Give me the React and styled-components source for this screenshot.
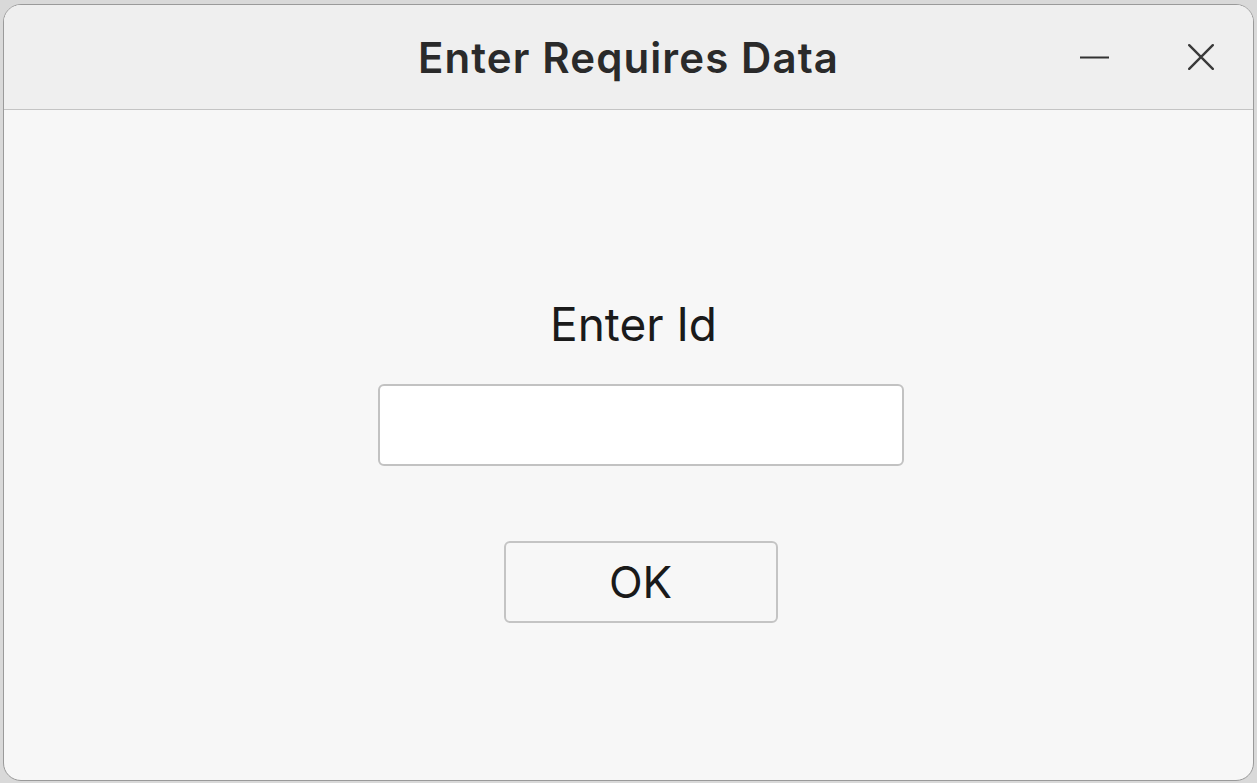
import React from "react";
import styled, { createGlobalStyle } from "styled-components";

const Global = createGlobalStyle`
  html, body {
    margin: 0;
    padding: 0;
    background: #d9d9d9;
    font-family: Inter, "Noto Sans", sans-serif;
  }
`;

const Screen = styled.div`
  width: 1257px;
  height: 783px;
  box-sizing: border-box;
  padding: 4px 3px 2px 3px;
  display: flex;
`;

const Window = styled.div`
  flex: 1;
  display: flex;
  flex-direction: column;
  border: 1.5px solid #9a9a9a;
  border-radius: 18px;
  background: #f7f7f7;
  overflow: hidden;
`;

const TitleBar = styled.div`
  height: 104px;
  flex-shrink: 0;
  display: grid;
  grid-template-columns: 1fr auto 1fr;
  align-items: center;
  background: #efefef;
  border-bottom: 1.5px solid #c4c4c4;
`;

const Title = styled.h1`
  grid-column: 2;
  margin: 0;
  font-size: 42px;
  font-weight: 600;
  color: #2a2a2a;
  letter-spacing: 1.1px;
`;

const Controls = styled.div`
  grid-column: 3;
  justify-self: end;
  display: flex;
  align-items: center;
  gap: 79px;
  padding-right: 39px;
`;

const CtrlButton = styled.button`
  border: none;
  background: none;
  padding: 0;
  width: ${(p) => p.$size}px;
  height: ${(p) => p.$size}px;
  display: flex;
  align-items: center;
  justify-content: center;
  color: #333;
`;

const Body = styled.div`
  flex: 1;
  display: flex;
  flex-direction: column;
  align-items: center;
  padding-top: 186px;
  padding-left: 24px;
`;

const Label = styled.div`
  font-size: 46px;
  font-weight: 400;
  color: #1a1a1a;
  line-height: 56px;
  margin-left: -14px;
`;

const Field = styled.input`
  margin-top: 32px;
  width: 526px;
  height: 82px;
  box-sizing: border-box;
  border: 2px solid #c2c2c2;
  border-radius: 6px;
  background: #fff;
  outline: none;
  font-size: 28px;
  padding: 0 16px;
  font-family: inherit;
`;

const OkButton = styled.button`
  margin-top: 75px;
  width: 274px;
  height: 82px;
  box-sizing: border-box;
  border: 2px solid #c4c4c4;
  border-radius: 6px;
  background: #f7f7f7;
  font-family: inherit;
  font-size: 44px;
  color: #1a1a1a;
  padding: 0;
`;

export default function App() {
  return (
    <Screen>
      <Global />
      <Window>
        <TitleBar>
          <Title>Enter Requires Data</Title>
          <Controls>
            <CtrlButton $size={29} aria-label="Minimize">
              <svg width="29" height="29" viewBox="0 0 29 29">
                <line x1="0" y1="14.5" x2="29" y2="14.5" stroke="#333" strokeWidth="2.2" />
              </svg>
            </CtrlButton>
            <CtrlButton $size={26} aria-label="Close">
              <svg width="26" height="26" viewBox="0 0 26 26">
                <path d="M1.2 1.2 L24.8 24.8 M24.8 1.2 L1.2 24.8" stroke="#3a3a3a" strokeWidth="2.4" strokeLinecap="round" />
              </svg>
            </CtrlButton>
          </Controls>
        </TitleBar>
        <Body>
          <Label>Enter Id</Label>
          <Field type="text" />
          <OkButton>OK</OkButton>
        </Body>
      </Window>
    </Screen>
  );
}
